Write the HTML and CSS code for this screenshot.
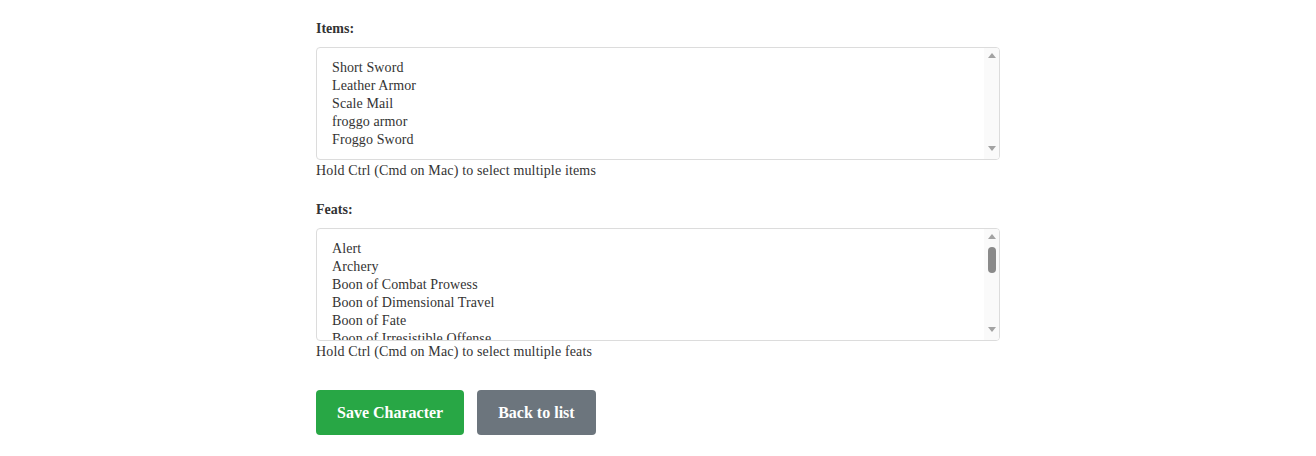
FILE: index.html
```html
<!DOCTYPE html>
<html>
<head>
<meta charset="utf-8">
<link rel="stylesheet" href="styles.css">
</head>
<body>
<div class="form">
  <div class="group">
    <div class="label">Items:</div>
    <div class="listbox">
      <div class="options">
        <div class="opt">Short Sword</div>
        <div class="opt">Leather Armor</div>
        <div class="opt">Scale Mail</div>
        <div class="opt">froggo armor</div>
        <div class="opt">Froggo Sword</div>
      </div>
      <div class="scrollbar">
        <div class="arrow"><span class="tri up"></span></div>
        <div class="track"></div>
        <div class="arrow bottom"><span class="tri down"></span></div>
      </div>
    </div>
    <div class="hint">Hold Ctrl (Cmd on Mac) to select multiple items</div>
  </div>
  <div class="group">
    <div class="label">Feats:</div>
    <div class="listbox">
      <div class="options">
        <div class="opt">Alert</div>
        <div class="opt">Archery</div>
        <div class="opt">Boon of Combat Prowess</div>
        <div class="opt">Boon of Dimensional Travel</div>
        <div class="opt">Boon of Fate</div>
        <div class="opt">Boon of Irresistible Offense</div>
      </div>
      <div class="scrollbar">
        <div class="arrow"><span class="tri up"></span></div>
        <div class="track"><div class="thumb"></div></div>
        <div class="arrow bottom"><span class="tri down"></span></div>
      </div>
    </div>
    <div class="hint">Hold Ctrl (Cmd on Mac) to select multiple feats</div>
  </div>
  <div class="actions">
    <button class="btn btn-save">Save Character</button>
    <button class="btn btn-back">Back to list</button>
  </div>
</div>
</body>
</html>
```
FILE: styles.css
```css
html, body {
  margin: 0;
  padding: 0;
  background: #fff;
}
body {
  font-family: "Liberation Serif", "Times New Roman", serif;
  font-size: 14px;
  color: #333;
}
.form {
  width: 684px;
  margin: 0 auto;
  padding-top: 19px;
}
.group {
  margin-bottom: 19px;
}
.label {
  font-weight: bold;
  line-height: 20px;
  margin-bottom: 8px;
}
.listbox {
  display: flex;
  height: 113px;
  box-sizing: border-box;
  border: 1px solid #dcdcdc;
  border-radius: 4px;
  overflow: hidden;
  background: #fff;
}
.options {
  flex: 1;
  padding: 11px 15px 0;
  overflow: hidden;
}
.opt {
  line-height: 18px;
  height: 18px;
  white-space: nowrap;
  color: #333;
  letter-spacing: 0.1px;
}
.scrollbar {
  width: 15px;
  background: #fafafa;
  display: flex;
  flex-direction: column;
  align-items: center;
}
.arrow {
  width: 15px;
  height: 15px;
  display: flex;
  align-items: center;
  justify-content: center;
  flex: none;
}
.arrow.bottom {
  margin-bottom: 3px;
}
.tri {
  width: 0;
  height: 0;
  border-left: 4.5px solid transparent;
  border-right: 4.5px solid transparent;
}
.tri.up {
  border-bottom: 5px solid #a3a3a3;
}
.tri.down {
  border-top: 5px solid #a3a3a3;
}
.track {
  flex: 1;
  width: 100%;
  display: flex;
  justify-content: center;
  padding-top: 3px;
  box-sizing: border-box;
}
.thumb {
  width: 8px;
  height: 26px;
  border-radius: 4px;
  background: #8a8a8a;
}
.hint {
  line-height: 20px;
  padding-top: 1px;
  letter-spacing: 0.15px;
}
.actions {
  display: flex;
  gap: 13px;
  margin-top: 28px;
}
.btn {
  font-family: "Liberation Serif", "Times New Roman", serif;
  font-weight: bold;
  font-size: 16px;
  color: #fff;
  border: none;
  border-radius: 4px;
  height: 45px;
  width: auto;
  padding: 0 21px;
  cursor: pointer;
}
.btn-save {
  background: #28a745;
}
.btn-back {
  background: #6c757d;
}
```
